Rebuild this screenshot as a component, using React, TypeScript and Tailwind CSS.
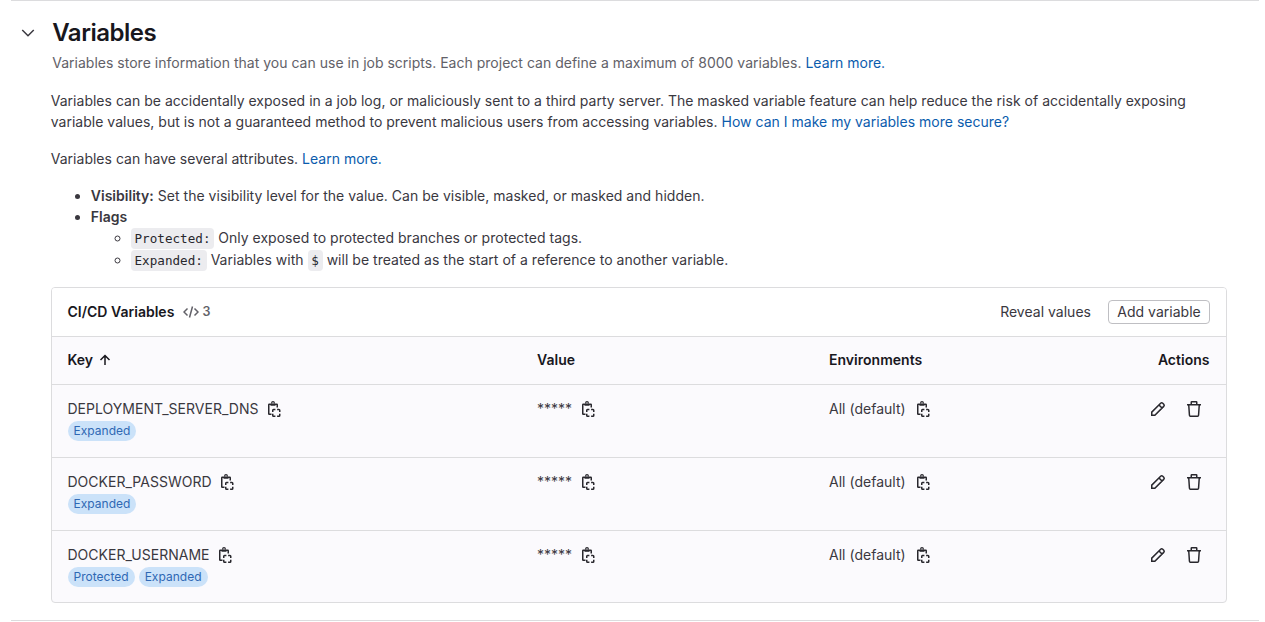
import React from "react";

type Row = { key: string; tags: string[] };

const rows: Row[] = [
  { key: "DEPLOYMENT_SERVER_DNS", tags: ["Expanded"] },
  { key: "DOCKER_PASSWORD", tags: ["Expanded"] },
  { key: "DOCKER_USERNAME", tags: ["Protected", "Expanded"] },
];

const svgProps = {
  width: 16,
  height: 16,
  viewBox: "0 0 16 16",
  fill: "none",
  stroke: "currentColor",
  strokeWidth: 1.5,
};

function CopyIcon() {
  return (
    <svg {...svgProps} className="shrink-0 text-[#28272d]">
      <path d="M5.5 13.25H3.25a.5.5 0 0 1-.5-.5v-9a.5.5 0 0 1 .5-.5H5M9 3.25h1.75a.5.5 0 0 1 .5.5V6.5" />
      <circle cx="7" cy="2" r="1.35" strokeWidth="1.2" />
      <path d="M4.5 3.9h5" strokeWidth="1.8" />
      <path d="M6.75 11V9.25a.8.8 0 0 1 .8-.8H9.4M11.1 8.45h1.85a.8.8 0 0 1 .8.8V11M13.75 12.7v1.75a.8.8 0 0 1-.8.8H11.1M9.4 15.25H7.55a.8.8 0 0 1-.8-.8V12.7" />
    </svg>
  );
}

function PencilIcon() {
  return (
    <svg {...svgProps}>
      <path d="M1.75 14.25v-3.1l8.9-8.9a1.5 1.5 0 0 1 2.1 0l1 1a1.5 1.5 0 0 1 0 2.1l-8.9 8.9zM9 4l3 3" />
    </svg>
  );
}

function TrashIcon() {
  return (
    <svg {...svgProps}>
      <path d="M1 3.75h14M5.25 3.5V1.25a.5.5 0 0 1 .5-.5h4.5a.5.5 0 0 1 .5.5V3.5M2.75 4l.7 10.3a1 1 0 0 0 1 .95h7.1a1 1 0 0 0 1-.95l.7-10.3" />
    </svg>
  );
}

function Code({ children }: { children: React.ReactNode }) {
  return (
    <code className="rounded bg-[#ececef] px-[3.75px] py-[3px] font-['DejaVu_Sans_Mono',monospace] text-[12.6px] text-[#28272d]">
      {children}
    </code>
  );
}

function Link({ children }: { children: React.ReactNode }) {
  return (
    <a href="#" className="text-[#0b5cad]">
      {children}
    </a>
  );
}

const columns = "grid grid-cols-[469.5px_292px_1fr_auto] pr-[16.5px] pl-[15.5px]";

export default function App() {
  return (
    <div className="h-[622px] overflow-hidden bg-white pl-[11px] pr-1.5 font-['Inter',sans-serif] text-[14px] leading-[21px] tracking-[0.015px] text-[#3a383f]">
      <section className="h-[621px] border-y border-[#dcdcde] pr-8 pl-[39.75px]">
        <header className="-ml-8 flex gap-4 pt-[18px]">
          <svg {...svgProps} className="mt-1.5 ml-[1.5px] shrink-0">
            <path d="M2.25 5 8 10.75 13.75 5" />
          </svg>
          <div>
            <h2 className="text-2xl leading-[28px] font-semibold tracking-[-0.5px] text-[#18171d]">Variables</h2>
            <p className="mt-[5px] whitespace-nowrap tracking-[0.01px] text-[#626168]">
              Variables store information that you can use in job scripts. Each project can define a maximum of 8000 variables.{" "}
              <Link>Learn more.</Link>
            </p>
          </div>
        </header>
        <p className="mt-[17px] whitespace-nowrap">
          Variables can be accidentally exposed in a job log, or maliciously sent to a third party server. The masked variable feature can help reduce the risk of accidentally exposing
          <br />
          variable values, but is not a guaranteed method to prevent malicious users from accessing variables.{" "}
          <Link>How can I make my variables more secure?</Link>
        </p>
        <p className="mt-4">
          Variables can have several attributes. <Link>Learn more.</Link>
        </p>
        <ul className="mt-4 list-disc pl-10 tracking-[0.02px]">
          <li>
            <strong className="font-semibold">Visibility:</strong> Set the visibility level for the value. Can be visible, masked, or masked and hidden.
          </li>
          <li>
            <strong className="font-semibold">Flags</strong>
            <ul className="list-[circle] pl-10 leading-[21px]">
              <li>
                <Code>Protected:</Code> Only exposed to protected branches or protected tags.
              </li>
              <li>
                <Code>Expanded:</Code> Variables with <Code>$</Code> will be treated as the start of a reference to another variable.
              </li>
            </ul>
          </li>
        </ul>
        <div className="mt-4 ml-[0.25px] h-[316px] overflow-hidden rounded border border-[#dcdcde] bg-[#fbfafd]">
          <div className="flex h-12 items-center bg-white pr-4 pb-px pl-[15.5px]">
            <h3 className="font-semibold text-[#18171d]">CI/CD Variables</h3>
            <svg {...svgProps} className="ml-[9px] text-[#626168]">
              <path d="M4.5 4.5 1 8l3.5 3.5M11.5 4.5 15 8l-3.5 3.5M9.5 2.5l-3 11" />
            </svg>
            <span className="ml-[3px] text-[12.5px] font-semibold text-[#626168]">3</span>
            <button className="ml-auto">Reveal values</button>
            <button className="ml-[17px] h-6 w-[102px] rounded border border-[#bfbfc3] leading-5">Add variable</button>
          </div>
          <div className={columns + " h-12 items-center border-t border-[#dcdcde] pb-[2px] font-semibold text-[#18171d]"}>
            <span className="flex items-center gap-1">
              Key
              <svg {...svgProps}>
                <path d="M8 13V3.5M3.5 8 8 3.5 12.5 8" />
              </svg>
            </span>
            <span>Value</span>
            <span>Environments</span>
            <span>Actions</span>
          </div>
          {rows.map((row) => (
            <div key={row.key} className={columns + " h-[73px] border-t border-[#dcdcde] pt-[13px]"}>
              <div>
                <div className="flex items-center gap-[7px]">
                  {row.key}
                  <CopyIcon />
                </div>
                <div className="mt-0.5 flex gap-1">
                  {row.tags.map((tag) => (
                    <span key={tag} className="h-5 rounded-full bg-[#cbe2f9] px-1.5 text-[12px] leading-5 text-[#2f68b4]">
                      {tag}
                    </span>
                  ))}
                </div>
              </div>
              <div className="flex h-[21px] items-center gap-2">
                *****
                <CopyIcon />
              </div>
              <div className="flex h-[21px] items-center gap-[9px]">
                All (default)
                <CopyIcon />
              </div>
              <div className="mr-2 flex h-[21px] items-center gap-5 text-[#28272d]">
                <PencilIcon />
                <TrashIcon />
              </div>
            </div>
          ))}
        </div>
      </section>
    </div>
  );
}
